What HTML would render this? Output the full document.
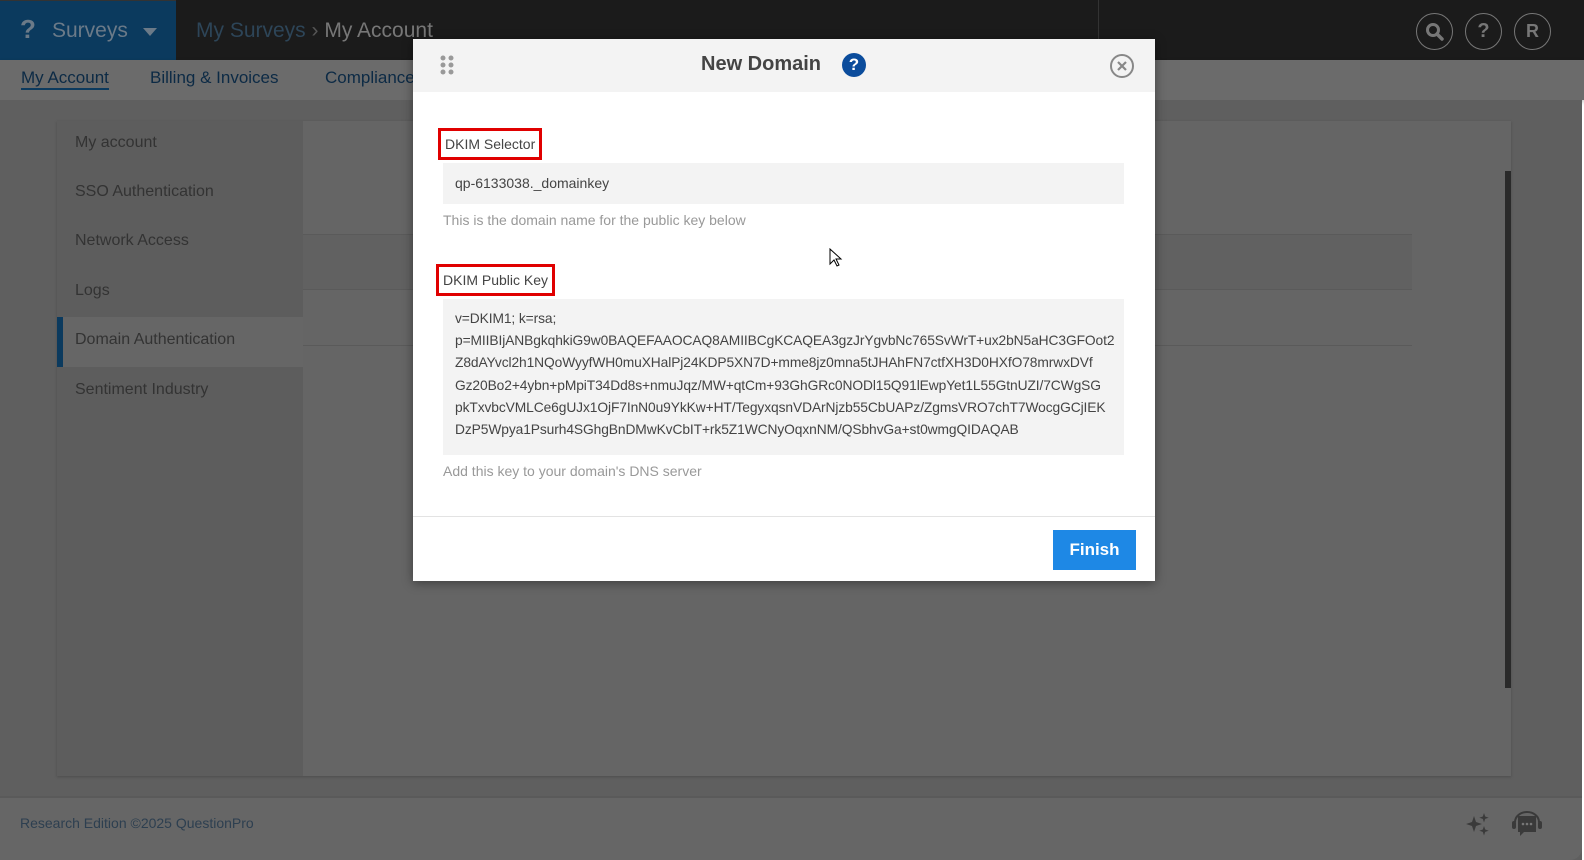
<!DOCTYPE html>
<html><head><meta charset="utf-8"><style>
*{box-sizing:border-box;margin:0;padding:0}
body{width:1584px;height:860px;overflow:hidden;background:#fff;font-family:"Liberation Sans",sans-serif;position:relative}
.abs{position:absolute}
.top{left:0;top:0;width:1584px;height:60px;background:#1b1b1b}
.logo{left:0;top:0;width:176px;height:60px;background:#0b3a5e;border-top:1px solid #333}
.nav{left:0;top:60px;width:1584px;height:40px;background:#6b6b6b;box-shadow:0 2px 4px rgba(0,0,0,.3)}
.navt{font-size:17px;color:#0c2a45;top:68px}
.pg{left:0;top:100px;width:1582px;height:760px;background:#5f5f5f}
.card{left:57px;top:121px;width:1454px;height:655px;background:#656565;box-shadow:0 1px 3px rgba(0,0,0,.2)}
.side{left:57px;top:121px;width:246px;height:655px;background:#5d5d5d}
.si{left:75px;font-size:16px;color:#333}
.foot{left:0;top:796px;width:1582px;height:64px;background:#666;border-top:2px solid #5a5a5a;border-radius:0 0 12px 0}
.ic{width:37px;height:37px;border:1px solid #777;border-radius:50%;color:#777;font-weight:bold;font-size:18px;text-align:center;line-height:35px;top:13px}
.modal{left:413px;top:39px;width:742px;height:542px;background:#fff;box-shadow:0 2px 10px rgba(0,0,0,.4)}
.mh{left:0;top:0;width:742px;height:53px;background:#f3f3f3}
.lbl{font-size:14px;color:#444;border:3px solid #e00000;padding:0 4px;height:32px;line-height:26px}
.inp{background:#f3f3f3;color:#444;font-size:14px}
.help{font-size:14px;color:#999}
.key div{white-space:nowrap;height:22.2px;line-height:22px;font-size:13.8px;letter-spacing:-0.1px}
</style></head><body>
<div class="abs top"></div>
<div class="abs logo"></div>
<div class="abs" style="left:20px;top:14px;font-size:26px;color:#6b7a88;font-weight:bold">?</div>
<div class="abs" style="left:52px;top:19px;font-size:21px;color:#6b7a88">Surveys</div>
<div class="abs" style="left:143px;top:28px;width:0;height:0;border-left:7px solid transparent;border-right:7px solid transparent;border-top:8px solid #6b7a88"></div>
<div class="abs" style="left:196px;top:19px;font-size:21px;color:#2d4558">My Surveys <span style="color:#555">›</span> <span style="color:#777">My Account</span></div>
<div class="abs" style="left:1098px;top:0;width:1px;height:60px;background:#333"></div>
<div class="abs ic" style="left:1416px">
<svg width="20" height="20" viewBox="0 0 20 20" style="margin-top:8px"><circle cx="8" cy="8" r="5.5" stroke="#777" stroke-width="3" fill="none"/><path d="M12 12l5 5" stroke="#777" stroke-width="3.5" stroke-linecap="round"/></svg></div>
<div class="abs ic" style="left:1465px;font-size:20px">?</div>
<div class="abs ic" style="left:1514px">R</div>
<div class="abs nav"></div>
<div class="abs navt" style="left:21px;border-bottom:2px solid #0c3a5e;height:22px">My Account</div>
<div class="abs navt" style="left:150px">Billing &amp; Invoices</div>
<div class="abs navt" style="left:325px">Compliance</div>
<div class="abs pg"></div>
<div class="abs card"></div>
<div class="abs side"></div>
<div class="abs si" style="top:134px">My account</div>
<div class="abs si" style="top:183px">SSO Authentication</div>
<div class="abs si" style="top:232px">Network Access</div>
<div class="abs si" style="top:282px">Logs</div>
<div class="abs" style="left:57px;top:317px;width:246px;height:50px;background:#666;border-left:6px solid #0b3a5e"></div>
<div class="abs si" style="top:331px">Domain Authentication</div>
<div class="abs si" style="top:381px">Sentiment Industry</div>
<div class="abs" style="left:303px;top:234px;width:1109px;height:56px;background:#616161;border-top:1px solid #5a5a5a;border-bottom:1px solid #5a5a5a"></div>
<div class="abs" style="left:303px;top:345px;width:1109px;height:1px;background:#5a5a5a"></div>
<div class="abs" style="left:1505px;top:171px;width:6px;height:517px;background:#2a2a2a"></div>
<div class="abs foot"></div>
<div class="abs" style="left:20px;top:815px;font-size:14px;color:#2d3f50">Research Edition ©2025 QuestionPro</div>
<svg class="abs" style="left:1465px;top:812px" width="26" height="24" viewBox="0 0 26 24"><path d="M9 4l2 6 6 2-6 2-2 6-2-6-6-2 6-2z M19 1l1.2 3.5 3.5 1.2-3.5 1.2L19 10.5l-1.2-3.6-3.5-1.2 3.5-1.2z M19 14l1.2 3.5 3.5 1.2-3.5 1.2L19 23.5l-1.2-3.6-3.5-1.2 3.5-1.2z" fill="#3a3a3a"/></svg>
<svg class="abs" style="left:1510px;top:810px" width="34" height="28" viewBox="0 0 34 28"><path d="M5 12a12 10 0 0 1 24 0" stroke="#3a3a3a" stroke-width="2" fill="none"/><rect x="2" y="11" width="4" height="8" rx="2" fill="#3a3a3a"/><rect x="28" y="11" width="4" height="8" rx="2" fill="#3a3a3a"/><path d="M8 6h18v16H14l-4 4v-4H8z" fill="#3a3a3a"/><circle cx="13" cy="14" r="1.3" fill="#777"/><circle cx="17" cy="14" r="1.3" fill="#777"/><circle cx="21" cy="14" r="1.3" fill="#777"/></svg>

<div class="abs modal">
<div class="abs mh"></div>
<svg class="abs" style="left:27px;top:16px" width="14" height="20" viewBox="0 0 14 20"><g fill="#999"><circle cx="3" cy="3" r="2.5"/><circle cx="11" cy="3" r="2.5"/><circle cx="3" cy="10" r="2.5"/><circle cx="11" cy="10" r="2.5"/><circle cx="3" cy="17" r="2.5"/><circle cx="11" cy="17" r="2.5"/></g></svg>
<div class="abs" style="left:288px;top:14px;font-size:20px;font-weight:bold;color:#444">New Domain</div>
<div class="abs" style="left:429px;top:14px;width:24px;height:24px;border-radius:50%;background:#0b4c9c;color:#fff;font-weight:bold;font-size:17px;text-align:center;line-height:24px">?</div>
<svg class="abs" style="left:696px;top:14px" width="26" height="26" viewBox="0 0 26 26"><circle cx="13" cy="13" r="11" stroke="#888" stroke-width="2" fill="none"/><path d="M9 9l8 8M17 9l-8 8" stroke="#888" stroke-width="2.2"/></svg>
<div class="abs lbl" style="left:25px;top:89px">DKIM Selector</div>
<div class="abs inp" style="left:30px;top:124px;width:681px;height:41px;padding:12px 12px">qp-6133038._domainkey</div>
<div class="abs help" style="left:30px;top:173px">This is the domain name for the public key below</div>
<div class="abs lbl" style="left:23px;top:225px">DKIM Public Key</div>
<div class="abs inp key" style="left:30px;top:260px;width:681px;height:156px;padding:9px 12px">
<div>v=DKIM1; k=rsa;</div>
<div>p=MIIBIjANBgkqhkiG9w0BAQEFAAOCAQ8AMIIBCgKCAQEA3gzJrYgvbNc765SvWrT+ux2bN5aHC3GFOot2</div>
<div>Z8dAYvcl2h1NQoWyyfWH0muXHalPj24KDP5XN7D+mme8jz0mna5tJHAhFN7ctfXH3D0HXfO78mrwxDVf</div>
<div>Gz20Bo2+4ybn+pMpiT34Dd8s+nmuJqz/MW+qtCm+93GhGRc0NODl15Q91lEwpYet1L55GtnUZI/7CWgSG</div>
<div>pkTxvbcVMLCe6gUJx1OjF7InN0u9YkKw+HT/TegyxqsnVDArNjzb55CbUAPz/ZgmsVRO7chT7WocgGCjIEK</div>
<div>DzP5Wpya1Psurh4SGhgBnDMwKvCbIT+rk5Z1WCNyOqxnNM/QSbhvGa+st0wmgQIDAQAB</div>
</div>
<div class="abs help" style="left:30px;top:424px">Add this key to your domain's DNS server</div>
<div class="abs" style="left:0;top:477px;width:742px;height:1px;background:#e3e3e3"></div>
<div class="abs" style="left:640px;top:491px;width:83px;height:40px;background:#1e88e5;color:#fff;font-weight:bold;font-size:17px;text-align:center;line-height:40px">Finish</div>
</div>
<svg class="abs" style="left:829px;top:248px" width="14" height="20" viewBox="0 0 14 20"><path d="M1 1v15l4-4 3 6 2-1-3-6h5z" fill="#fff" stroke="#000" stroke-width="1"/></svg>
</body></html>
